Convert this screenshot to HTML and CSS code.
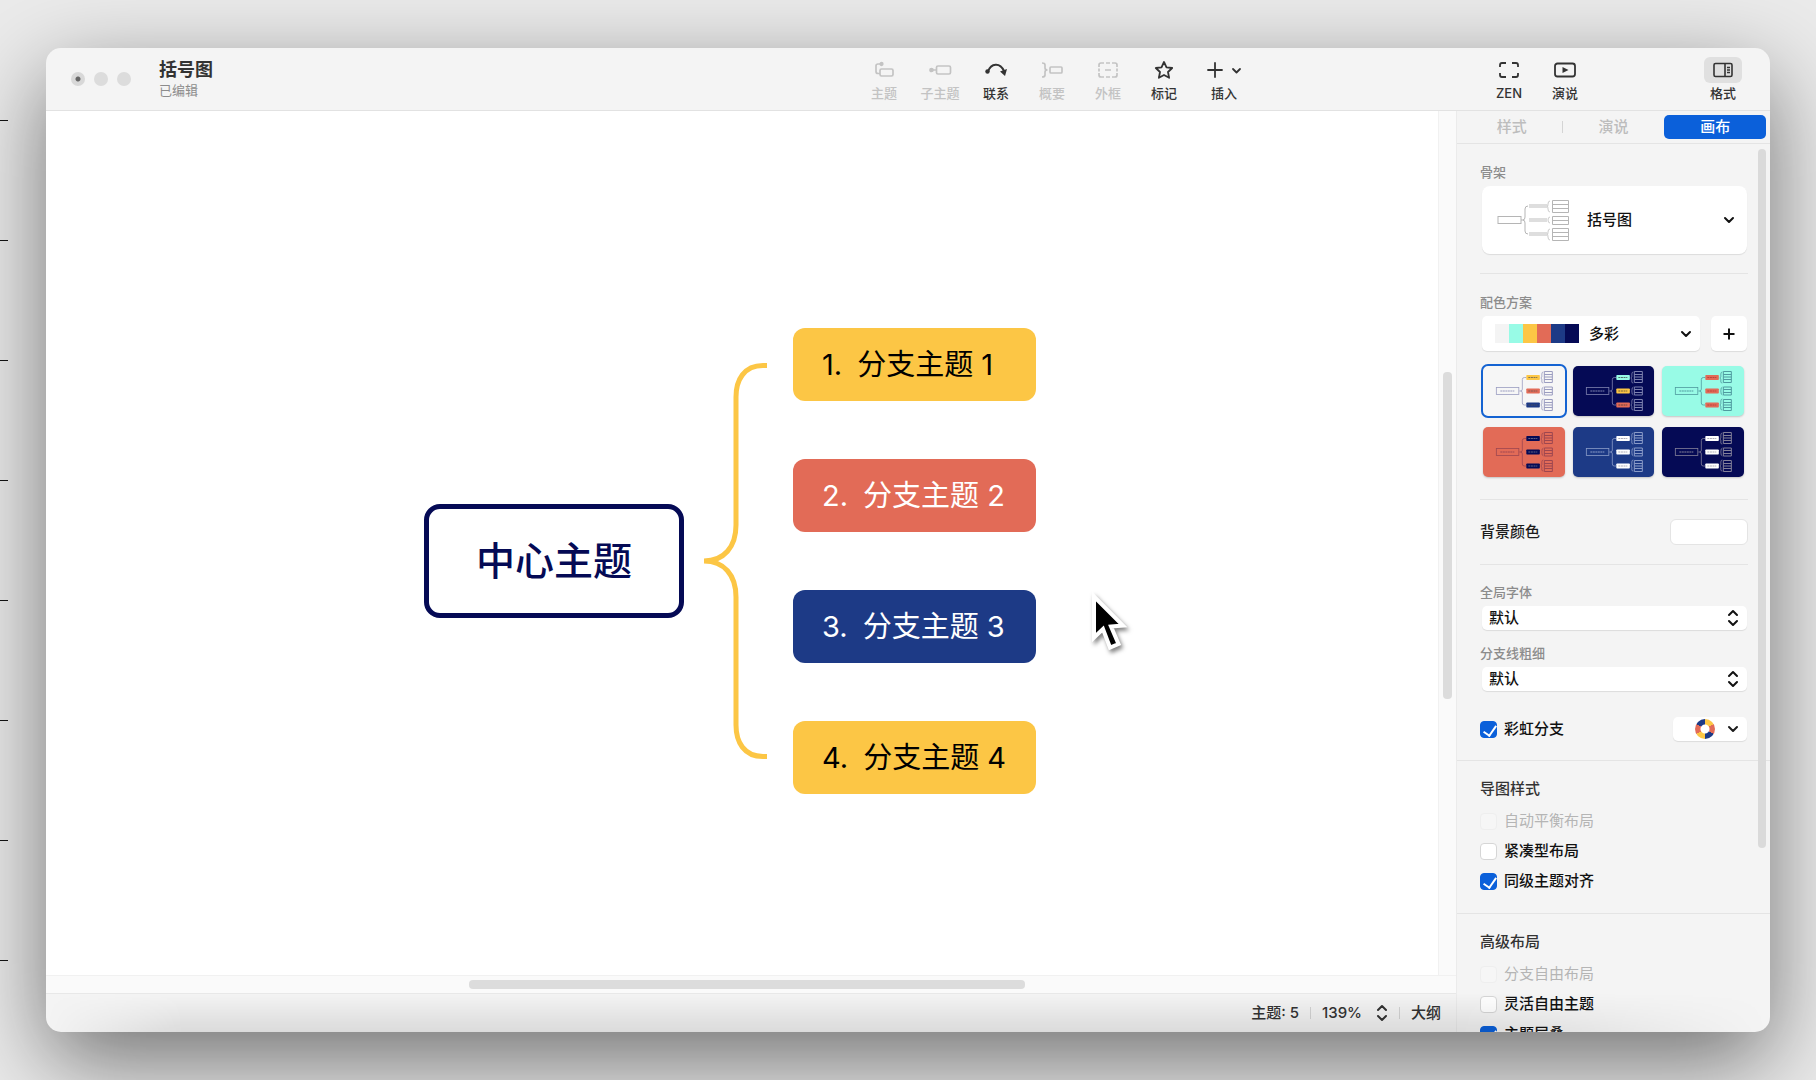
FILE: index.html
```html
<!DOCTYPE html>
<html lang="zh-CN">
<head>
  <meta charset="UTF-8">
  <meta name="viewport" content="width=device-width, initial-scale=1.0">
  <title>括号图</title>
  <link rel="stylesheet" href="styles.css">
</head>
<body>
  <!-- shared shapes -->
  <svg class="defs" width="0" height="0" aria-hidden="true">
    <symbol id="chevron" viewBox="0 0 12 8"><path d="M2 2l4 4 4-4" fill="none" stroke="currentColor" stroke-width="2" stroke-linecap="round" stroke-linejoin="round"/></symbol>
    <symbol id="updown" viewBox="0 0 12 18"><path d="M2 6l4-4 4 4M2 12l4 4 4-4" fill="none" stroke="currentColor" stroke-width="2" stroke-linecap="round" stroke-linejoin="round"/></symbol>
    <symbol id="mini-map" viewBox="0 0 81 50">
      <g fill="none" stroke="var(--line)" stroke-width=".8">
        <rect x="13" y="21.5" width="22.5" height="7"/>
        <path d="M17 25h14" stroke-width="1.2" stroke-dasharray="2 .5"/>
        <path d="M36 25h2M43 11.5h-2q-2 0-2 2V23q0 2-1.5 2 1.5 0 1.5 2v10q0 2 2 2h2"/>
        <path d="M60 6q-1.5 0-1.5 2v3l-1 1 1 1v3q0 1 1.5 1M60 21q-1.5 0-1.5 4t1.5 4M60 33q-1.5 0-1.5 2v3l-1 1 1 1v3q0 1 1.5 1"/>
      </g>
      <path d="M61 5.5h8v11h-8zM61 8.5h8M61 11h8M61 13.5h8M61 21h8v8h-8zM61 23.5h8M61 26.5h8M61 33.5h8v11h-8zM61 36.5h8M61 39h8M61 41.5h8" fill="none" stroke="var(--line)" stroke-width="1"/>
      <rect x="43" y="9" width="13.5" height="5" rx=".8" fill="var(--a)"/>
      <rect x="43" y="22.5" width="13.5" height="5" rx=".8" fill="var(--b)"/>
      <rect x="43" y="36.5" width="13.5" height="5" rx=".8" fill="var(--c)"/>
      <path d="M45 11.5h9M45 25h9M45 39h9" stroke="var(--ink)" stroke-width="1" stroke-dasharray="2 .6" opacity=".7"/>
    </symbol>
  </svg>

  <div class="ruler"></div>

  <div class="window">
    <header class="toolbar">
      <div class="lights"><span class="light edited"></span><span class="light"></span><span class="light"></span></div>
      <div class="doc">
        <h1>括号图</h1>
        <p>已编辑</p>
      </div>
      <div class="tools">
        <button class="tool" disabled>
          <svg width="20" height="18" viewBox="0 0 20 18" fill="none" stroke="currentColor" stroke-width="1.7"><path d="M7 3H4Q2 3 2 5v5.5q0 2 2 2h2"/><circle cx="7.5" cy="3" r="1.3" fill="currentColor"/><rect x="6" y="8" width="13" height="7" rx="1.5"/></svg>
          主题</button>
        <button class="tool" disabled>
          <svg width="24" height="18" viewBox="0 0 24 18" fill="none" stroke="currentColor" stroke-width="1.7"><circle cx="3.5" cy="9" r="1.5" fill="currentColor"/><path d="M4 9h4"/><rect x="8.500" y="5" width="14" height="8" rx="1.5"/></svg>
          子主题</button>
        <button class="tool">
          <svg width="24" height="18" viewBox="0 0 24 18" fill="none" stroke="currentColor" stroke-width="2"><path d="M4 10.5C7 2 16 1 20 10"/><circle cx="3.5" cy="10.5" r="2.2" fill="currentColor" stroke="none"/><path d="M16 10.500l7-2.500-2 7z" fill="currentColor" stroke="none"/></svg>
          联系</button>
        <button class="tool" disabled>
          <svg width="24" height="18" viewBox="0 0 24 18" fill="none" stroke="currentColor" stroke-width="1.7"><path d="M2 2q3 0 3 2v3q0 2 2.5 2-2.5 0-2.5 2v3q0 2-3 2"/><rect x="10" y="6" width="12" height="6" rx="1"/></svg>
          概要</button>
        <button class="tool" disabled>
          <svg width="22" height="18" viewBox="0 0 22 18" fill="none" stroke="currentColor" stroke-width="1.7"><path d="M2 6V4q0-2 2-2h3M9 2h4M15 2h3q2 0 2 2v2M2 7.5v3M20 7.5v3M2 12v2q0 2 2 2h3M9 16h4M15 16h3q2 0 2-2v-2M8 9h6"/></svg>
          外框</button>
        <button class="tool">
          <svg width="20" height="18" viewBox="0 0 20 18" fill="none" stroke="currentColor" stroke-width="1.8" stroke-linejoin="round"><path d="M10 1l2.5 5.3 5.7.7-4.200 4 1.1 5.8L10 14l-5.1 2.8L6 11 1.800 7l5.7-.7z"/></svg>
          标记</button>
        <button class="tool insert">
          <svg width="36" height="18" viewBox="0 0 36 18" fill="none" stroke="currentColor" stroke-width="1.8" stroke-linecap="round" stroke-linejoin="round"><path d="M9 2v14M2 9h14M27 8l3.5 3.5L34 8"/></svg>
          插入</button>
      </div>
      <div class="view-tools">
        <button class="tool">
          <svg width="20" height="18" viewBox="0 0 20 18" fill="none" stroke="currentColor" stroke-width="1.8"><path d="M1 6V4q0-2 2-2h4M13 2h4q2 0 2 2v2M1 12v2q0 2 2 2h4M13 16h4q2 0 2-2v-2"/></svg>
          ZEN</button>
        <button class="tool">
          <svg width="24" height="18" viewBox="0 0 24 18" fill="none" stroke="currentColor" stroke-width="1.8"><rect x="2" y="2.5" width="20" height="13" rx="2.5"/><path d="M9.5 6v6l6-3z" fill="currentColor" stroke="none"/></svg>
          演说</button>
      </div>
      <button class="tool format">
        <svg width="20" height="18" viewBox="0 0 20 18" fill="none" stroke="currentColor" stroke-width="1.6"><rect x="1" y="2.5" width="18" height="13" rx="1.5"/><path d="M12 2.5v13M14 6.5h3M14 9h3M14 11.5h3"/></svg>
        格式</button>
    </header>

    <div class="workspace">
      <main class="editor">
        <div class="board">
          <div class="canvas">
            <div class="map">
              <div class="root-topic">中心主题</div>
              <svg class="brace" width="64" height="396" viewBox="0 0 64 396" fill="none" stroke="#fcc645" stroke-width="5"><path d="M63 2.5H59C40 2.5 32 17 32 34V162C32 184 20 198 0 198 20 198 32 212 32 234V362C32 379 40 393.5 59 393.5H63"/></svg>
              <div class="branches">
                <div class="topic yellow"><span>1.</span>分支主题 1</div>
                <div class="topic red"><span>2.</span>分支主题 2</div>
                <div class="topic blue"><span>3.</span>分支主题 3</div>
                <div class="topic yellow"><span>4.</span>分支主题 4</div>
              </div>
            </div>
            <svg class="pointer" width="50" height="70" viewBox="0 0 50 70"><path d="M6 6.5L35 35.5 23 36.5 30.5 54 22 57.5 15 39 6 47.5z" fill="#000" stroke="#fff" stroke-width="4"/></svg>
          </div>
          <div class="track-y"><div class="thumb"></div></div>
        </div>
        <div class="track-x"><div class="thumb"></div></div>
        <footer class="status">
          <span>主题: 5</span>
          <i></i>
          <button>139% <svg width="12" height="18"><use href="#updown"/></svg></button>
          <i></i>
          <button>大纲</button>
        </footer>
      </main>

      <aside class="panel">
        <nav class="tabs">
          <button>样式</button>
          <button>演说</button>
          <button class="active">画布</button>
        </nav>
        <div class="panel-body">
          <section>
            <label class="caption" for="skeleton">骨架</label>
            <div class="field skeleton">
              <svg class="preview" width="74" height="44" viewBox="0 0 74 44" fill="none" stroke="#b5b5b5">
                <rect x="1" y="18.5" width="23" height="7"/>
                <path d="M24 22h3M31 8q-3 0-3 3v8q0 3-2 3 2 0 2 3v8q0 3 3 3"/>
                <path d="M32 8h18M32 22h18M32 36h18" stroke="#dedede" stroke-width="4"/>
                <path d="M53 3q-2 0-2 3t-1 2q1 0 1 3t2 3M53 19q-2 0-2 3t2 3M53 31q-2 0-2 3t-1 2q1 0 1 3t2 3" stroke="#ccc"/>
                <path d="M55.5 2.5h16v12h-16zM55.5 6.5h16M55.5 10.5h16M55.5 18.5h16v8h-16zM55.5 22.5h16M55.5 30.5h16v12h-16zM55.5 34.5h16M55.5 38.5h16"/>
              </svg>
              <select id="skeleton"><option>括号图</option></select>
              <svg class="arrow" width="12" height="8"><use href="#chevron"/></svg>
            </div>
          </section>

          <section class="colors">
            <label class="caption" for="scheme">配色方案</label>
            <div class="row scheme-row">
              <div class="field scheme">
                <div class="swatches"><b class="s1"></b><b class="s2"></b><b class="s3"></b><b class="s4"></b><b class="s5"></b><b class="s6"></b></div>
                <select id="scheme"><option>多彩</option></select>
                <svg class="arrow" width="12" height="8"><use href="#chevron"/></svg>
              </div>
              <button class="add" aria-label="添加"><svg width="12" height="12" viewBox="0 0 12 12" stroke="currentColor" stroke-width="2"><path d="M6 .5v11M.5 6h11"/></svg></button>
            </div>
            <div class="themes">
              <button class="theme t1 selected" aria-label="配色 1"><svg viewBox="0 0 81 50"><use href="#mini-map"/></svg></button>
              <button class="theme t2" aria-label="配色 2"><svg viewBox="0 0 81 50"><use href="#mini-map"/></svg></button>
              <button class="theme t3" aria-label="配色 3"><svg viewBox="0 0 81 50"><use href="#mini-map"/></svg></button>
              <button class="theme t4" aria-label="配色 4"><svg viewBox="0 0 81 50"><use href="#mini-map"/></svg></button>
              <button class="theme t5" aria-label="配色 5"><svg viewBox="0 0 81 50"><use href="#mini-map"/></svg></button>
              <button class="theme t6" aria-label="配色 6"><svg viewBox="0 0 81 50"><use href="#mini-map"/></svg></button>
            </div>
          </section>

          <section class="background">
            <div class="row">
              <span id="bg-label">背景颜色</span>
              <button class="color-well" aria-labelledby="bg-label"></button>
            </div>
          </section>

          <section class="fonts">
            <label class="caption" for="font">全局字体</label>
            <div class="field small">
              <select id="font"><option>默认</option></select>
              <svg class="arrow" width="12" height="18"><use href="#updown"/></svg>
            </div>
            <label class="caption" for="line">分支线粗细</label>
            <div class="field small">
              <select id="line"><option>默认</option></select>
              <svg class="arrow" width="12" height="18"><use href="#updown"/></svg>
            </div>
            <div class="row rainbow">
              <label class="check"><input type="checkbox" checked>彩虹分支</label>
              <button class="wheel" aria-label="彩虹颜色"><span class="ring"></span><svg width="12" height="8"><use href="#chevron"/></svg></button>
            </div>
          </section>

          <section class="options">
            <h2>导图样式</h2>
            <label class="check off"><input type="checkbox" disabled>自动平衡布局</label>
            <label class="check"><input type="checkbox">紧凑型布局</label>
            <label class="check"><input type="checkbox" checked>同级主题对齐</label>
          </section>

          <section class="options">
            <h2>高级布局</h2>
            <label class="check off"><input type="checkbox" disabled>分支自由布局</label>
            <label class="check"><input type="checkbox">灵活自由主题</label>
            <label class="check"><input type="checkbox" checked>主题层叠</label>
          </section>
          <div class="panel-thumb"></div>
        </div>
      </aside>
    </div>
  </div>
</body>
</html>
```
FILE: styles.css
```css
* { box-sizing: border-box; }
body {
  margin: 0; height: 100vh; padding: 48px 46px; overflow: hidden;
  background: #ebebeb; color: #1c1c1c;
  font: 500 15px/22px Inter, "Noto Sans CJK SC", sans-serif;
}
button, select, input { font: inherit; color: inherit; margin: 0; }
button { border: 0; padding: 0; background: none; }
h1, h2, p { margin: 0; }
svg { display: block; flex: none; }
.defs { position: absolute; }

/* tick marks along the left edge of the desktop */
.ruler {
  position: absolute; left: 0; top: 1px; width: 8px; height: 960px; z-index: 1;
  background: repeating-linear-gradient(transparent 0 119px, #111 119px 120px);
}

.window {
  position: relative; height: 100%; display: flex; flex-direction: column;
  background: #f4f4f4; border-radius: 15px; overflow: hidden;
  box-shadow: 0 30px 90px rgba(0, 0, 0, 0.52);
}
.window::after {
  content: ""; position: absolute; left: 0; right: 0; bottom: 0; height: 39px;
  background: linear-gradient(transparent, rgba(0, 0, 0, 0.1));
  -webkit-mask-image: linear-gradient(90deg, transparent, #000 8%, #000 82%, transparent);
  mask-image: linear-gradient(90deg, transparent, #000 8%, #000 82%, transparent);
  pointer-events: none;
}

/* toolbar */
.toolbar {
  flex: none; height: 63px; display: flex; align-items: center;
  padding: 0 19px 0 25px; border-bottom: 1px solid #e2e2e2;
}
.lights { display: flex; gap: 9px; }
.light { width: 14px; height: 14px; border-radius: 50%; background: #dcdcdc; }
.edited { background: radial-gradient(circle, #666 2px, #d8d8d8 3px); }
.doc { flex: 1; padding-left: 28px; }
.doc h1 { font-size: 18px; line-height: 22px; font-weight: 600; color: #333; }
.doc p { font-size: 13px; line-height: 18px; font-weight: 400; color: #8c8c8c; }
.tools { display: flex; margin-right: 225px; }
.view-tools { display: flex; margin-right: 102px; }
.tool {
  width: 56px; display: flex; flex-direction: column; align-items: center; gap: 1px;
  font-size: 13px; line-height: 18px; color: #333;
}
.tool svg { height: 26px; padding: 4px 0; }
.tool:disabled { color: #c3c3c3; }
.insert { width: 64px; }
.format svg { width: 38px; padding: 4px 9px; background: #e0e0e0; border-radius: 6px; }

.workspace { flex: 1; min-height: 0; display: flex; }
.editor { flex: 1; min-width: 0; display: flex; flex-direction: column; }
.board { flex: 1; min-height: 0; display: flex; }
.canvas { flex: 1; position: relative; background: #fff; overflow: hidden; }

/* mind map */
.map { position: absolute; left: 378px; top: 217px; display: flex; align-items: center; }
.root-topic {
  padding: 24px 47px; border: 5px solid #050a55; border-radius: 16px;
  color: #050a55; font-size: 39px; line-height: 56px;
}
.brace { margin: 0 25px 0 20px; }
.branches { display: flex; flex-direction: column; gap: 58px; }
.topic {
  width: 243px; padding: 16px 0 16px 29px; border-radius: 12px; white-space: nowrap;
  font: 400 29px/41px Inter, "Noto Sans CJK SC", sans-serif;
}
.topic span { margin-right: 15px; }
.yellow { background: #fcc645; color: #000; }
.red { background: #e26b57; color: #fff; }
.blue { background: #1d3a86; color: #fff; }
.pointer {
  position: absolute; left: 1042px; top: 479px;
  filter: drop-shadow(2px 3px 2px rgba(0, 0, 0, 0.5));
}

/* scrollbars */
.track-y { width: 18px; background: #fafafa; border-left: 1px solid #f1f1f1; padding: 261px 4px 0; }
.track-x { height: 18px; background: #fafafa; border-top: 1px solid #f1f1f1; padding: 4px 0 0 423px; }
.track-y .thumb { height: 327px; border-radius: 4px; background: #dcdcdc; }
.track-x .thumb { width: 556px; height: 9px; border-radius: 4px; background: #dcdcdc; }

.status {
  height: 39px; display: flex; align-items: center; justify-content: flex-end; gap: 11px;
  padding-right: 15px; border-top: 1px solid #e8e8e8; color: #333;
}
.status button { display: flex; align-items: center; gap: 14px; }
.status i { width: 1px; height: 12px; background: #d4d4d4; }

/* side panel */
.panel { width: 314px; display: flex; flex-direction: column; border-left: 1px solid #ebebeb; }
.tabs {
  flex: none; display: grid; grid-template-columns: repeat(3, 1fr);
  padding: 4px 4px 4px 4px; border-bottom: 1px solid #e4e4e4;
}
.tabs button { position: relative; height: 24px; border-radius: 5px; color: #bdbdbd; }
.tabs button:first-child::after {
  content: ""; position: absolute; right: 0; top: 6px; width: 1px; height: 12px; background: #d4d4d4;
}
.tabs .active { background: #0b60da; color: #fff; }
.panel-body { position: relative; flex: 1; min-height: 0; overflow: hidden; }
.panel-thumb {
  position: absolute; right: 4px; top: 5px; width: 8px; height: 699px;
  border-radius: 4px; background: #dadada;
}
section { margin: 0 22px 0 23px; padding: 18px 0 19px; border-bottom: 1px solid #e4e4e4; }
.caption { display: block; margin-bottom: 4px; font-size: 13px; line-height: 20px; color: #8c8c8c; }
.row { display: flex; align-items: center; justify-content: space-between; }
.field, .add, .wheel { background: #fff; border-radius: 5px; box-shadow: 0 1px 1px rgba(0, 0, 0, 0.1); }
.field { position: relative; margin: 0 1px 0 2px; }
.field select {
  appearance: none; display: block; width: 100%; height: 100%;
  border: 0; padding: 0 24px 0 7px; background: transparent; color: #111;
}
.arrow { position: absolute; right: 12px; top: 0; bottom: 0; margin: auto; pointer-events: none; color: #111; }
.skeleton { height: 68px; border-radius: 8px; }
.skeleton select { padding-left: 105px; }
.skeleton .preview { position: absolute; left: 15px; top: 12px; }

.colors { padding-bottom: 22px; }
.scheme-row { gap: 11px; margin-right: 1px; }
.scheme { flex: 1; height: 35px; margin-right: 0; }
.scheme select { padding-left: 107px; }
.scheme .arrow { right: 8px; }
.swatches { position: absolute; left: 13px; top: 8px; display: flex; pointer-events: none; }
.swatches b { width: 14px; height: 19px; }
.s1 { background: #f4f4f4; }
.s2 { background: #98fbe6; }
.s3 { background: #fcc645; }
.s4 { background: #e26b57; }
.s5 { background: #1d3a86; }
.s6 { background: #050a55; }
.add { width: 36px; height: 35px; display: flex; align-items: center; justify-content: center; color: #111; }
.themes {
  display: grid; grid-template-columns: repeat(3, 1fr); gap: 11px 8px;
  margin: 15px 4px 0 3px;
}
.theme { height: 50px; border-radius: 5px; box-shadow: 0 1px 2px rgba(0, 0, 0, 0.2); }
.theme svg { width: 100%; height: 50px; }
.selected { outline: 2px solid #1463d2; box-shadow: none; }
.t1 { background: #f6f6f6; --line: #9a9cc0; --a: #fcc645; --b: #e26b57; --c: #1d3a86; --ink: #555; }
.t2 { background: #050a55; --line: #7f83b0; --a: #98fbe6; --b: #fcc645; --c: #e26b57; --ink: #333; }
.t3 { background: #98fbe6; --line: #4f9a9f; --a: #e26b57; --b: #e26b57; --c: #e26b57; --ink: #a33; }
.t4 { background: #e26b57; --line: #9d4650; --a: #050a55; --b: #050a55; --c: #050a55; --ink: #889; }
.t5 { background: #1d3a86; --line: #8b9cc8; --a: #fff; --b: #fff; --c: #fff; --ink: #889; }
.t6 { background: #050a55; --line: #84819a; --a: #fff; --b: #fff; --c: #fff; --ink: #889; }

.background { padding: 19px 0; }
.color-well { width: 78px; height: 26px; border: 1px solid #e4e4e4; border-radius: 6px; background: #fff; }

.fonts { padding: 17px 0 0; border: 0; }
.small { height: 24px; margin-bottom: 13px; }
.small .arrow { right: 8px; }
.rainbow { margin: 26px 1px 19px 0; }
.wheel { width: 74px; height: 24px; display: flex; align-items: center; justify-content: flex-end; gap: 12px; padding-right: 8px; }
.ring {
  width: 20px; height: 20px; border-radius: 50%;
  background:
    radial-gradient(circle, #fff 4px, transparent 5px),
    conic-gradient(#fcc645 60deg, #e26b57 60deg 120deg, #1d3a86 120deg 180deg, #fcc645 180deg 240deg, #e26b57 240deg 300deg, #1d3a86 300deg);
}

.check { display: flex; align-items: center; gap: 7px; line-height: 24px; color: #111; }
.check input {
  appearance: none; position: relative; width: 17px; height: 17px;
  border: 1px solid #d6d6d6; border-radius: 4px; background: #fff;
}
.check input:checked { background: #0b60da; border-color: #0b60da; }
.check input:checked::after {
  content: ""; position: absolute; left: 5px; top: 1px; width: 6px; height: 11px;
  border: solid #fff; border-width: 0 2px 2px 0; transform: rotate(35deg);
}
.off { color: #b5b5b5; font-weight: 400; }
.off input { background: #f6f6f6; border-color: #eee; }
.options { margin: 0; padding: 17px 22px 20px 23px; border-top: 1px solid #e4e4e4; border-bottom: 0; }
.options h2 { margin-bottom: 9px; font-size: 15px; line-height: 22px; font-weight: 500; color: #333; }
.options .check + .check { margin-top: 6px; }
```
